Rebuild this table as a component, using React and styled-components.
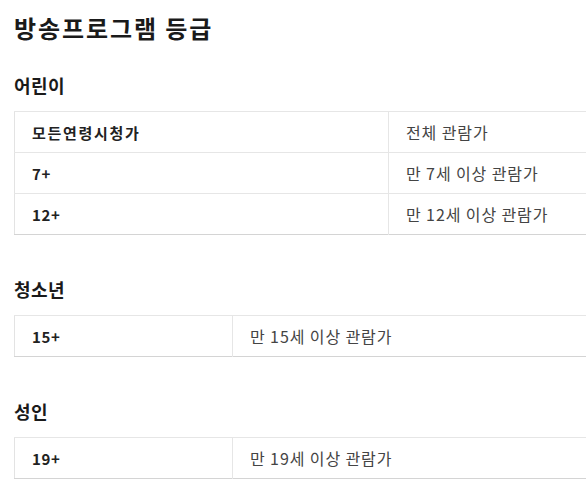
import React from "react";
import styled, { createGlobalStyle } from "styled-components";

const Global = createGlobalStyle`
  html, body { margin: 0; padding: 0; background: #fff; overflow: hidden; }
  body { font-family: "Noto Sans CJK KR", "Noto Sans", sans-serif; color: #222; }
`;

const Page = styled.div`
  width: 586px;
  height: 496px;
  overflow: hidden;
  box-sizing: border-box;
  padding: 11px 0 0 14px;
`;

const Title = styled.h1`
  margin: 0;
  font-size: 24px;
  line-height: 34px;
  letter-spacing: 1.9px;
  font-weight: 700;
  color: #1a1a1a;
`;

const Section = styled.section`
  margin-top: ${(p) => p.$gap}px;
`;

const SectionTitle = styled.h2`
  margin: 0 0 14px;
  font-size: 18px;
  line-height: 24px;
  letter-spacing: 0.4px;
  font-weight: 700;
  color: #1a1a1a;
`;

const Table = styled.table`
  width: 620px;
  border-collapse: collapse;
  table-layout: fixed;
  border: 1px solid #e3e3e3;
  border-bottom-color: #d4d4d4;
`;

const Row = styled.tr`
  border-top: 1px solid #e6e6e6;
`;

const Label = styled.th`
  width: ${(p) => p.$w}px;
  box-sizing: border-box;
  height: 40px;
  padding: 0 17px;
  text-align: left;
  font-size: 15px;
  letter-spacing: ${(p) => (p.$num ? 0.6 : 1.7)}px;
  font-weight: 700;
  color: #222;
  border-right: 1px solid #e6e6e6;
`;

const Value = styled.td`
  height: 40px;
  padding: 0 17px;
  font-size: 16px;
  letter-spacing: 0.9px;
  font-weight: 400;
  color: #444;
`;

const sections = [
  {
    title: "어린이",
    gap: 28,
    col: 374,
    rows: [
      ["모든연령시청가", "전체 관람가"],
      ["7+", "만 7세 이상 관람가"],
      ["12+", "만 12세 이상 관람가"],
    ],
  },
  {
    title: "청소년",
    gap: 42,
    col: 218,
    rows: [["15+", "만 15세 이상 관람가"]],
  },
  {
    title: "성인",
    gap: 42,
    col: 218,
    rows: [["19+", "만 19세 이상 관람가"]],
  },
];

export default function App() {
  return (
    <>
      <Global />
      <Page>
        <Title>방송프로그램 등급</Title>
        {sections.map((s) => (
          <Section key={s.title} $gap={s.gap}>
            <SectionTitle>{s.title}</SectionTitle>
            <Table>
              <tbody>
                {s.rows.map(([k, v]) => (
                  <Row key={k}>
                    <Label $w={s.col} $num={/^\d/.test(k)}>{k}</Label>
                    <Value>{v}</Value>
                  </Row>
                ))}
              </tbody>
            </Table>
          </Section>
        ))}
      </Page>
    </>
  );
}
